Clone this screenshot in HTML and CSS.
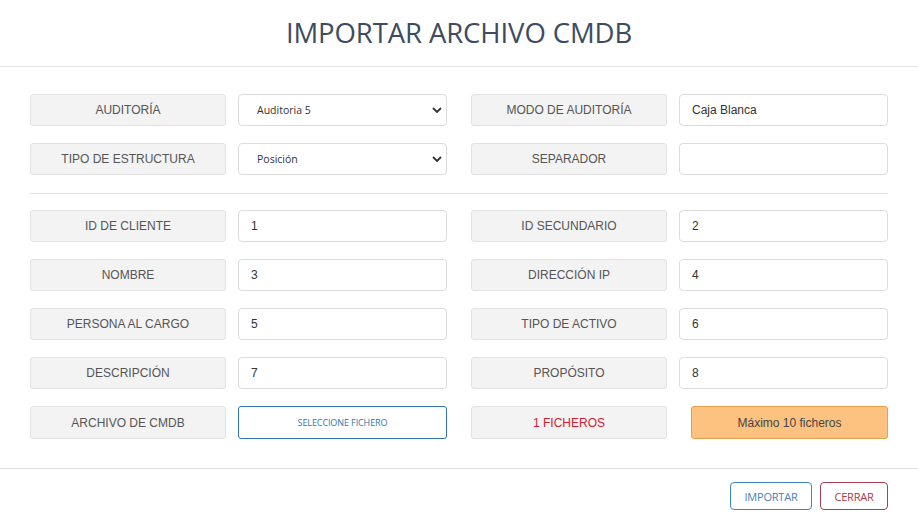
FILE: index.html
```html
<!DOCTYPE html>
<html lang="es">
<head>
<meta charset="utf-8">
<title>Importar archivo CMDB</title>
<link rel="stylesheet" href="styles.css">
</head>
<body>
<div class="modal">
  <div class="modal-header"><h1 class="title">IMPORTAR ARCHIVO CMDB</h1></div>
  <div class="modal-body">
    <div class="grid">
      <div class="field"><div class="label">AUDITORÍA</div><div class="select"><span>Auditoria 5</span><svg class="chev" viewBox="0 0 10 6" width="10" height="6"><path d="M1 1l4 4 4-4" fill="none" stroke="#333" stroke-width="1.8"/></svg></div></div>
      <div class="field"><div class="label">MODO DE AUDITORÍA</div><div class="input">Caja Blanca</div></div>
      <div class="field"><div class="label">TIPO DE ESTRUCTURA</div><div class="select"><span>Posición</span><svg class="chev" viewBox="0 0 10 6" width="10" height="6"><path d="M1 1l4 4 4-4" fill="none" stroke="#333" stroke-width="1.8"/></svg></div></div>
      <div class="field"><div class="label">SEPARADOR</div><div class="input"></div></div>
    </div>
    <div class="sep"></div>
    <div class="grid">
      <div class="field"><div class="label">ID DE CLIENTE</div><div class="input">1</div></div>
      <div class="field"><div class="label">ID SECUNDARIO</div><div class="input">2</div></div>
      <div class="field"><div class="label">NOMBRE</div><div class="input">3</div></div>
      <div class="field"><div class="label">DIRECCIÓN IP</div><div class="input">4</div></div>
      <div class="field"><div class="label">PERSONA AL CARGO</div><div class="input">5</div></div>
      <div class="field"><div class="label">TIPO DE ACTIVO</div><div class="input">6</div></div>
      <div class="field"><div class="label">DESCRIPCIÓN</div><div class="input">7</div></div>
      <div class="field"><div class="label">PROPÓSITO</div><div class="input">8</div></div>
      <div class="field tall"><div class="label">ARCHIVO DE CMDB</div><div class="file-btn">SELECCIONE FICHERO</div></div>
      <div class="field tall"><div class="label red">1 FICHEROS</div><div class="warn">Máximo 10 ficheros</div></div>
    </div>
  </div>
  <div class="modal-footer">
    <div class="btn btn-blue">IMPORTAR</div>
    <div class="btn btn-red">CERRAR</div>
  </div>
</div>
</body>
</html>
```

FILE: styles.css
```css
* { box-sizing: border-box; }
html, body { margin: 0; padding: 0; background: #fff; }
body { width: 918px; height: 522px; overflow: hidden; font-family: "Liberation Sans", Arial, sans-serif; }

.modal-header {
  height: 67px;
  border-bottom: 1px solid #e2e2e2;
  display: flex;
  align-items: center;
  justify-content: center;
}
.title {
  margin: 0;
  font-family: "Open Sans", "Noto Sans", sans-serif;
  font-weight: 400;
  font-size: 27.5px;
  color: #3d4c60;
  letter-spacing: -0.1px;
  padding-bottom: 1px;
}

.modal-body {
  padding: 27px 30px 29px 30px;
  border-bottom: 1px solid #e2e2e2;
}
.grid {
  display: grid;
  grid-template-columns: 417px 417px;
  column-gap: 24px;
  row-gap: 17px;
}
.field {
  display: grid;
  grid-template-columns: 196px 209px;
  column-gap: 12px;
  height: 32px;
}
.field.tall { height: 33px; }
.label {
  background: #f3f3f3;
  border: 1px solid #e2e2e2;
  border-radius: 3px;
  display: flex;
  align-items: center;
  justify-content: center;
  font-size: 12px;
  color: #555;
}
.label.red { color: #d3212d; }
.input, .select {
  border: 1px solid #dcdcdc;
  border-radius: 4px;
  display: flex;
  align-items: center;
  padding-left: 12px;
  font-size: 12px;
  color: #333;
  background: #fff;
}
.select {
  justify-content: space-between;
  padding-left: 18px;
  padding-right: 4px;
  font-family: "Open Sans", "Noto Sans", sans-serif;
  font-size: 10.5px;
  color: #333;
}
.chev { display: block; }
.sep {
  height: 1px;
  background: #e2e2e2;
  margin: 18px 0 16px;
}
.file-btn {
  border: 1px solid #2f76b2;
  border-radius: 3px;
  display: flex;
  align-items: center;
  justify-content: center;
  font-family: "Open Sans", "Noto Sans", sans-serif;
  font-size: 9px;
  color: #3474ad;
  letter-spacing: -0.1px;
}
.field.tall .warn { margin-left: 12px; width: 197px; }
.warn {
  background: #fdc27f;
  border: 1px solid #e9a04e;
  border-radius: 3px;
  display: flex;
  align-items: center;
  justify-content: center;
  font-size: 12px;
  color: #444;
}

.modal-footer {
  display: flex;
  justify-content: flex-end;
  gap: 8px;
  padding: 13px 30px 0 0;
}
.btn {
  height: 28px;
  border-radius: 4px;
  display: flex;
  align-items: center;
  justify-content: center;
  font-family: "Open Sans", "Noto Sans", sans-serif;
  font-size: 11px;
  letter-spacing: -0.2px;
  background: #fff;
}
.btn-blue { width: 82px; border: 1px solid #3d86c0; color: #4a80b8; }
.btn-red { width: 68px; border: 1px solid #a9404f; color: #a33a49; }
```
